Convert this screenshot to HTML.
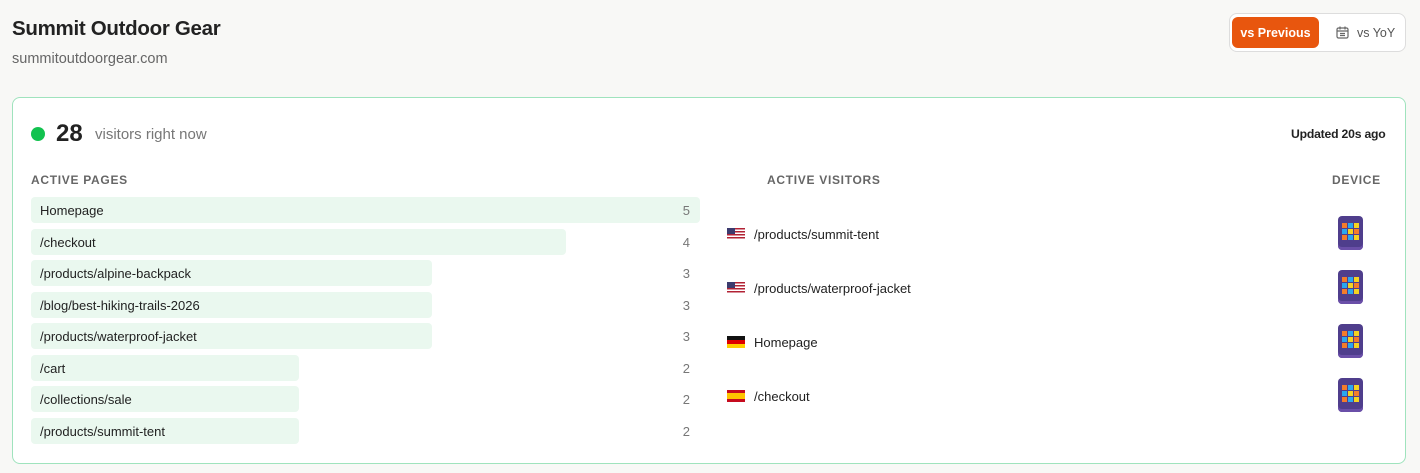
<!DOCTYPE html>
<html><head><meta charset="utf-8"><style>
*{margin:0;padding:0;box-sizing:border-box}
body{width:1420px;height:473px;background:#f8f8f6;font-family:"Liberation Sans",sans-serif;position:relative;overflow:hidden;color:#1f1f1f}
.a{position:absolute;white-space:nowrap}
h1{position:absolute;left:12px;top:17px;font-size:20.5px;font-weight:bold;color:#222;letter-spacing:-0.3px}
.sub{left:12px;top:51px;font-size:14.5px;color:#666}
.tog{left:1229px;top:13px;width:177px;height:39px;border:1px solid #ddd;border-radius:8px;background:#fff}
.btn{left:1232px;top:17px;width:87px;height:31px;background:#e8560e;border-radius:6px;color:#fff;font-size:12.5px;font-weight:bold;text-align:center;line-height:32px}
.yoy{left:1357px;top:26px;font-size:12.5px;color:#555}
.card{left:12px;top:97px;width:1394px;height:367px;background:#fff;border:1px solid #9fe3bd;border-radius:8px}
.dot{left:31px;top:127px;width:14px;height:14px;border-radius:50%;background:#12c24f}
.big{left:56px;top:120px;font-size:24px;font-weight:bold;color:#222}
.vis{left:95px;top:126px;font-size:15px;color:#777}
.upd{left:1291px;top:127px;font-size:12.2px;font-weight:bold;color:#222;letter-spacing:-0.2px}
.hd{font-size:12px;font-weight:bold;color:#666;letter-spacing:0.7px;top:173px}
.bar{left:31px;height:26px;background:#eaf8ef;border-radius:4px}
.pl{left:40px;font-size:13px;color:#222}
.ct{left:640px;width:50px;text-align:right;font-size:13px;color:#777}
.flag{left:727px;width:18px;height:12px}
.vp{left:754px;font-size:13px;color:#222}
.dev{left:1338px;width:25px;height:34px;border-radius:4px;background:#4f3e8c;box-shadow:inset 0 -3px 0 #6a4fa8}
.dev i{position:absolute;width:5px;height:5px}
</style></head><body>
<h1>Summit Outdoor Gear</h1>
<div class="a sub">summitoutdoorgear.com</div>
<div class="a tog"></div>
<div class="a btn">vs Previous</div>
<svg class="a" style="left:1335px;top:25px" width="15" height="15" viewBox="0 0 15 15" fill="none" stroke="#666" stroke-width="1.2"><rect x="2" y="3" width="11" height="10" rx="1.5"/><path d="M2 6h11M5 1.5v3M10 1.5v3M5 8.5h5M5 10.5h5"/></svg>
<div class="a yoy">vs YoY</div>
<div class="a card"></div>
<div class="a dot"></div>
<div class="a big">28</div>
<div class="a vis">visitors right now</div>
<div class="a upd">Updated 20s ago</div>
<div class="a hd" style="left:31px">ACTIVE PAGES</div>
<div class="a hd" style="left:767px">ACTIVE VISITORS</div>
<div class="a hd" style="left:1332px">DEVICE</div>

<div class="a bar" style="top:197px;width:669px"></div><div class="a pl" style="top:203px">Homepage</div><div class="a ct" style="top:203px">5</div>
<div class="a bar" style="top:229px;width:535px"></div><div class="a pl" style="top:235px">/checkout</div><div class="a ct" style="top:235px">4</div>
<div class="a bar" style="top:260px;width:401px"></div><div class="a pl" style="top:266px">/products/alpine-backpack</div><div class="a ct" style="top:266px">3</div>
<div class="a bar" style="top:292px;width:401px"></div><div class="a pl" style="top:298px">/blog/best-hiking-trails-2026</div><div class="a ct" style="top:298px">3</div>
<div class="a bar" style="top:323px;width:401px"></div><div class="a pl" style="top:329px">/products/waterproof-jacket</div><div class="a ct" style="top:329px">3</div>
<div class="a bar" style="top:355px;width:268px"></div><div class="a pl" style="top:361px">/cart</div><div class="a ct" style="top:361px">2</div>
<div class="a bar" style="top:386px;width:268px"></div><div class="a pl" style="top:392px">/collections/sale</div><div class="a ct" style="top:392px">2</div>
<div class="a bar" style="top:418px;width:268px"></div><div class="a pl" style="top:424px">/products/summit-tent</div><div class="a ct" style="top:424px">2</div>

<div class="a flag" style="top:228px;background:repeating-linear-gradient(#b22234 0 1.5px,#fff 1.5px 3px)"><div style="width:8px;height:6px;background:#3c3b6e"></div></div>
<div class="a vp" style="top:227px">/products/summit-tent</div>
<div class="a flag" style="top:282px;background:repeating-linear-gradient(#b22234 0 1.5px,#fff 1.5px 3px)"><div style="width:8px;height:6px;background:#3c3b6e"></div></div>
<div class="a vp" style="top:281px">/products/waterproof-jacket</div>
<div class="a flag" style="top:336px;background:linear-gradient(#111 0 4px,#dd0000 4px 8px,#ffce00 8px)"></div>
<div class="a vp" style="top:335px">Homepage</div>
<div class="a flag" style="top:390px;background:linear-gradient(#c60b1e 0 3px,#ffc400 3px 9px,#c60b1e 9px)"></div>
<div class="a vp" style="top:389px">/checkout</div>

<div class="a dev" style="top:216px"><i style="left:4px;top:7px;background:#f47c2a"></i><i style="left:10px;top:7px;background:#2aa8f0"></i><i style="left:16px;top:7px;background:#f5d320"></i><i style="left:4px;top:13px;background:#2aa8f0"></i><i style="left:10px;top:13px;background:#f5d320"></i><i style="left:16px;top:13px;background:#f47c2a"></i><i style="left:4px;top:19px;background:#f47c2a"></i><i style="left:10px;top:19px;background:#2aa8f0"></i><i style="left:16px;top:19px;background:#f5d320"></i></div>
<div class="a dev" style="top:270px"><i style="left:4px;top:7px;background:#f47c2a"></i><i style="left:10px;top:7px;background:#2aa8f0"></i><i style="left:16px;top:7px;background:#f5d320"></i><i style="left:4px;top:13px;background:#2aa8f0"></i><i style="left:10px;top:13px;background:#f5d320"></i><i style="left:16px;top:13px;background:#f47c2a"></i><i style="left:4px;top:19px;background:#f47c2a"></i><i style="left:10px;top:19px;background:#2aa8f0"></i><i style="left:16px;top:19px;background:#f5d320"></i></div>
<div class="a dev" style="top:324px"><i style="left:4px;top:7px;background:#f47c2a"></i><i style="left:10px;top:7px;background:#2aa8f0"></i><i style="left:16px;top:7px;background:#f5d320"></i><i style="left:4px;top:13px;background:#2aa8f0"></i><i style="left:10px;top:13px;background:#f5d320"></i><i style="left:16px;top:13px;background:#f47c2a"></i><i style="left:4px;top:19px;background:#f47c2a"></i><i style="left:10px;top:19px;background:#2aa8f0"></i><i style="left:16px;top:19px;background:#f5d320"></i></div>
<div class="a dev" style="top:378px"><i style="left:4px;top:7px;background:#f47c2a"></i><i style="left:10px;top:7px;background:#2aa8f0"></i><i style="left:16px;top:7px;background:#f5d320"></i><i style="left:4px;top:13px;background:#2aa8f0"></i><i style="left:10px;top:13px;background:#f5d320"></i><i style="left:16px;top:13px;background:#f47c2a"></i><i style="left:4px;top:19px;background:#f47c2a"></i><i style="left:10px;top:19px;background:#2aa8f0"></i><i style="left:16px;top:19px;background:#f5d320"></i></div>
</body></html>
